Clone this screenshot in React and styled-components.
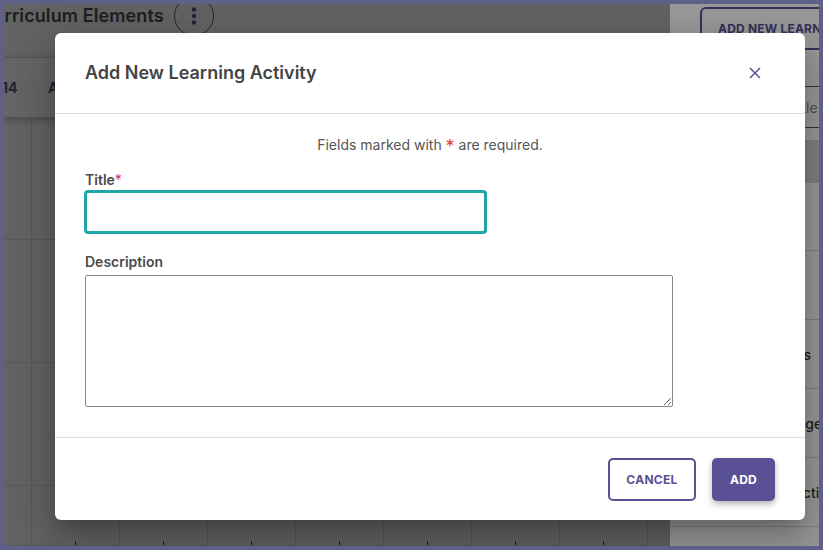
import React from "react";
import styled, { createGlobalStyle } from "styled-components";

const GlobalStyle = createGlobalStyle`
    html, body {
        margin: 0;
        padding: 0;
        background: #5f6089;
    }
    * {
        box-sizing: border-box;
    }
`;

const columns = [0, 1, 2, 3, 4, 5, 6, 7, 8];
const gridRows = [122, 123, 123, 60];

const sideRows = [
    { label: "", indent: 0 },
    { label: "", indent: 0 },
    { label: "Skills", indent: 106 },
    { label: "Knowledge", indent: 77 },
    { label: "Activity", indent: 123 },
];

const App = () => {
    return (
        <Frame>
            <GlobalStyle />
            <Main>
                <PageHeader>
                    <PageTitle>Curriculum Elements</PageTitle>
                    <MoreButton aria-label="More">
                        <svg width="8" height="20" viewBox="0 0 8 20">
                            <circle cx="4" cy="3.5" r="2.2" fill="#3a3a58" />
                            <circle cx="4" cy="10" r="2.2" fill="#3a3a58" />
                            <circle cx="4" cy="16.5" r="2.2" fill="#3a3a58" />
                        </svg>
                    </MoreButton>
                </PageHeader>
                <DayRow>
                    <DayNumber>14</DayNumber>
                    <DayLetter>A</DayLetter>
                </DayRow>
                <CalendarGrid>
                    {gridRows.map((height, r) => (
                        <CalendarRow key={r} $height={height}>
                            {columns.map((c) => (
                                <CalendarCell key={c} $first={c === 0} $last={c === 8}>
                                    {r === 3 && c > 0 && c < 8 && <Tick />}
                                </CalendarCell>
                            ))}
                        </CalendarRow>
                    ))}
                </CalendarGrid>
            </Main>
            <Side>
                <AddLearningButton>ADD NEW LEARNING ACTIVITY</AddLearningButton>
                <SearchRow>Title</SearchRow>
                <SideBand />
                {sideRows.map((row, i) => (
                    <SideRow key={i} $indent={row.indent}>
                        {row.label}
                    </SideRow>
                ))}
            </Side>
            <Overlay>
                <Dialog>
                    <DialogHeader>
                        <DialogTitle>Add New Learning Activity</DialogTitle>
                        <CloseButton aria-label="Close">
                            <svg width="12" height="12" viewBox="0 0 12 12">
                                <path d="M1 1 L11 11 M11 1 L1 11" stroke="#5a5096" strokeWidth="1.5" fill="none" />
                            </svg>
                        </CloseButton>
                    </DialogHeader>
                    <DialogBody>
                        <RequiredNote>
                            Fields marked with <RequiredStar>*</RequiredStar> are required.
                        </RequiredNote>
                        <TitleLabel>
                            Title<LabelStar>*</LabelStar>
                        </TitleLabel>
                        <TitleInput type="text" />
                        <DescriptionLabel>Description</DescriptionLabel>
                        <DescriptionInput />
                    </DialogBody>
                    <DialogFooter>
                        <CancelButton>CANCEL</CancelButton>
                        <AddButton>ADD</AddButton>
                    </DialogFooter>
                </Dialog>
            </Overlay>
        </Frame>
    );
};

const Frame = styled.div`
    position: relative;
    width: 823px;
    height: 550px;
    border: 4px solid #5f6089;
    display: flex;
    overflow: hidden;
    font-family: "Inter", "Liberation Sans", sans-serif;
`;

const Main = styled.div`
    width: 666px;
    flex-shrink: 0;
    display: flex;
    flex-direction: column;
    background-color: #a5a5a5;
    overflow: hidden;
`;

const PageHeader = styled.div`
    height: 53px;
    flex-shrink: 0;
    display: flex;
    align-items: flex-start;
    gap: 10px;
    margin-left: -24px;
`;

const PageTitle = styled.h1`
    margin: 0;
    font-size: 18px;
    line-height: 24px;
    font-weight: 600;
    letter-spacing: 0.1px;
    color: #333;
    white-space: nowrap;
`;

const MoreButton = styled.div`
    width: 40px;
    height: 40px;
    margin-top: -8px;
    border: 1.5px solid #3a3a58;
    border-radius: 50%;
    display: flex;
    align-items: center;
    justify-content: center;
    flex-shrink: 0;
`;

const DayRow = styled.div`
    height: 61px;
    flex-shrink: 0;
    display: flex;
    align-items: center;
    gap: 31px;
    border-top: 1px solid #8c8c8c;
    border-bottom: 1px solid #8c8c8c;
    background-color: #a9a9a9;
    box-shadow: 0 2px 6px rgba(0, 0, 0, 0.25);
    position: relative;
    font-size: 14px;
    font-weight: 700;
    color: #3a3a58;
`;

const DayNumber = styled.span`
    margin-left: -2px;
    width: 15px;
    white-space: nowrap;
`;

const DayLetter = styled.span``;

const CalendarGrid = styled.div`
    display: flex;
    flex-direction: column;
    flex: 1;
`;

const CalendarRow = styled.div`
    height: ${(props) => props.$height}px;
    flex-shrink: 0;
    display: flex;
    border-bottom: 1px solid #939393;
`;

const CalendarCell = styled.div`
    width: ${(props) => (props.$first ? "28px" : props.$last ? "18px" : "88px")};
    flex-shrink: 0;
    display: flex;
    align-items: flex-end;
    justify-content: center;
    border-right: ${(props) => (props.$last ? "none" : "1px solid #939393")};
`;

const Tick = styled.span`
    width: 1px;
    height: 4px;
    background-color: #2d3048;
`;

const Side = styled.div`
    flex: 1;
    min-width: 0;
    display: flex;
    flex-direction: column;
    background-color: #fff;
    overflow: hidden;
`;

const AddLearningButton = styled.div`
    width: 230px;
    height: 43px;
    flex-shrink: 0;
    margin: 3px 0 0 30px;
    border: 2px solid #5a5096;
    border-radius: 6px;
    display: flex;
    align-items: center;
    padding-left: 16px;
    font-size: 12px;
    font-weight: 700;
    letter-spacing: 0.2px;
    color: #5a5096;
    white-space: nowrap;
`;

const SearchRow = styled.div`
    height: 42px;
    flex-shrink: 0;
    margin-top: 36px;
    padding-left: 119px;
    display: flex;
    align-items: center;
    border-top: 1px solid #555;
    border-bottom: 1px solid #555;
    font-size: 14px;
    color: #888;
`;

const SideBand = styled.div`
    height: 43px;
    flex-shrink: 0;
    margin-top: 12px;
    background-color: #d8d6dc;
`;

const SideRow = styled.div`
    height: 69px;
    flex-shrink: 0;
    padding-left: ${(props) => props.$indent}px;
    display: flex;
    align-items: center;
    border-bottom: 1px solid #d6d6d6;
    font-size: 14px;
    font-weight: 500;
    color: #333;
    white-space: nowrap;
    &:nth-of-type(4) {
        height: 68px;
    }
`;

const Overlay = styled.div`
    position: absolute;
    inset: 0;
    padding: 29px 0 0 51px;
    background-color: rgba(0, 0, 0, 0.4);
`;

const Dialog = styled.div`
    width: 750px;
    height: 487px;
    display: flex;
    flex-direction: column;
    background-color: #fff;
    border-radius: 6px;
    box-shadow: 0 11px 15px -7px rgba(0, 0, 0, 0.2), 0 24px 38px 3px rgba(0, 0, 0, 0.14), 0 9px 46px 8px rgba(0, 0, 0, 0.12);
`;

const DialogHeader = styled.div`
    height: 81px;
    flex-shrink: 0;
    display: flex;
    align-items: center;
    justify-content: space-between;
    padding: 0 44px 1px 30px;
    border-bottom: 1px solid #dedede;
`;

const DialogTitle = styled.h2`
    margin: 0;
    font-size: 18px;
    font-weight: 600;
    color: #444;
`;

const CloseButton = styled.div`
    display: flex;
    width: 12px;
    height: 12px;
`;

const DialogBody = styled.div`
    flex: 1;
    display: flex;
    flex-direction: column;
    align-items: flex-start;
    padding: 21px 30px 0;
`;

const RequiredNote = styled.p`
    align-self: stretch;
    height: 20px;
    margin: 0;
    text-align: center;
    font-size: 14px;
    line-height: 20px;
    color: #555;
`;

const RequiredStar = styled.span`
    color: #d9443f;
    font-size: 18px;
    line-height: 18px;
    vertical-align: -3px;
`;

const FieldLabel = styled.label`
    display: block;
    font-size: 14px;
    line-height: 18px;
    font-weight: 600;
    color: #4a4a4a;
`;

const TitleLabel = styled(FieldLabel)`
    margin-top: 16px;
`;

const LabelStar = styled.span`
    color: #c2406a;
    font-weight: 400;
`;

const TitleInput = styled.input`
    display: block;
    width: 403px;
    height: 44px;
    margin: 1px 0 0 -1px;
    border: 3px solid #1fa6a8;
    border-radius: 4px;
    outline: none;
    background-color: #fff;
`;

const DescriptionLabel = styled(FieldLabel)`
    margin-top: 19px;
`;

const DescriptionInput = styled.textarea`
    display: block;
    width: 588px;
    height: 132px;
    margin-top: 4px;
    border: 1px solid #888;
    border-radius: 2px;
    outline: none;
    background-color: #fff;
`;

const DialogFooter = styled.div`
    height: 83px;
    flex-shrink: 0;
    display: flex;
    justify-content: flex-end;
    gap: 16px;
    padding: 20px 30px 0 0;
    border-top: 1px solid #dedede;
`;

const FooterButton = styled.div`
    height: 43px;
    border-radius: 5px;
    display: flex;
    align-items: center;
    justify-content: center;
    font-size: 12px;
    font-weight: 700;
    letter-spacing: 0.3px;
`;

const CancelButton = styled(FooterButton)`
    width: 88px;
    border: 2px solid #5a5096;
    color: #5a5096;
    background-color: #fff;
`;

const AddButton = styled(FooterButton)`
    width: 63px;
    color: #fff;
    background-color: #5a5096;
    box-shadow: 0 3px 6px rgba(0, 0, 0, 0.3);
`;

export default App;
